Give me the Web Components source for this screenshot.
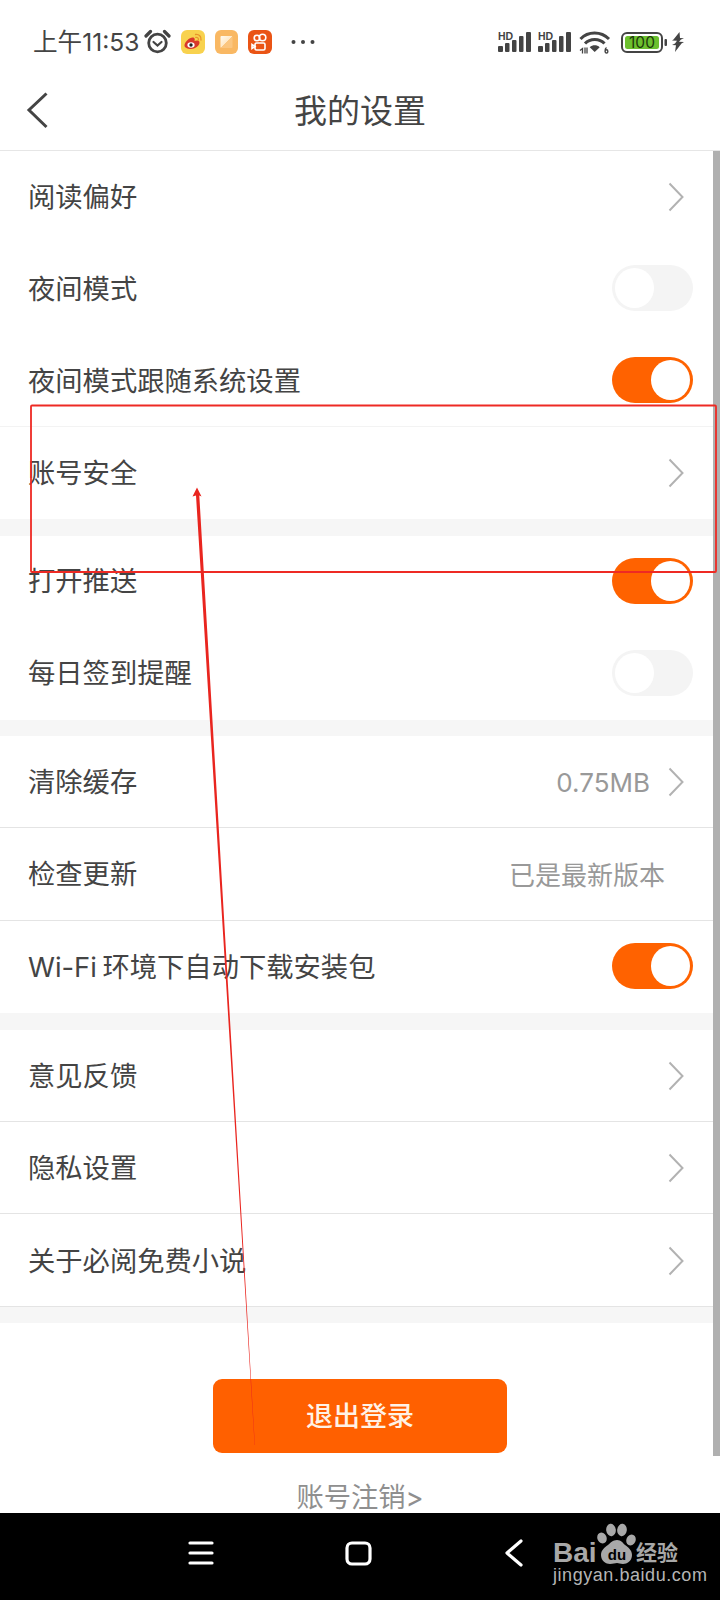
<!DOCTYPE html>
<html lang="zh">
<head>
<meta charset="utf-8">
<title>我的设置</title>
<style>
html,body{margin:0;padding:0;background:#fff}
body{width:720px;height:1600px;overflow:hidden;font-family:Inter,"Noto Sans CJK SC","Noto Sans",sans-serif;color:#444}
</style>
</head>
<body>
<settings-screen>
  <status-bar></status-bar>
  <title-bar>我的设置</title-bar>
  <scroll-area>
    <setting-row kind="link">阅读偏好</setting-row>
    <setting-row kind="off">夜间模式</setting-row>
    <setting-row kind="on" line="soft">夜间模式跟随系统设置</setting-row>
    <setting-row kind="link">账号安全</setting-row>
    <section-gap></section-gap>
    <setting-row kind="on">打开推送</setting-row>
    <setting-row kind="off">每日签到提醒</setting-row>
    <section-gap></section-gap>
    <setting-row tall kind="link" value="0.75MB" line="hard">清除缓存</setting-row>
    <setting-row tall kind="text" value="已是最新版本" line="hard">检查更新</setting-row>
    <setting-row tall kind="on">Wi-Fi 环境下自动下载安装包</setting-row>
    <section-gap></section-gap>
    <setting-row tall kind="link" line="hard">意见反馈</setting-row>
    <setting-row tall kind="link" line="hard">隐私设置</setting-row>
    <setting-row tall kind="link" line="hard">关于必阅免费小说</setting-row>
    <section-gap></section-gap>
    <logout-block></logout-block>
  </scroll-area>
  <nav-bar></nav-bar>
  <red-annotation></red-annotation>
</settings-screen>

<script>
function def(name, css, html){
  customElements.define(name, class extends HTMLElement{
    connectedCallback(){
      if(this.shadowRoot) return;
      const r=this.attachShadow({mode:'open'});
      r.innerHTML='<style>'+css+'</style>'+(typeof html==='function'?html(this):html);
    }
  });
}

def('settings-screen',
  ':host{display:flex;flex-direction:column;position:relative;width:720px;height:1600px;overflow:hidden;background:#fff}',
  '<slot></slot>');

def('status-bar',
  `:host{display:flex;align-items:center;height:80px;padding:4px 0 0 33px;box-sizing:border-box;color:#444;flex:none}
   .time{font:400 24.600px/1 Inter,"Noto Sans CJK SC",sans-serif;width:111px;white-space:nowrap}
   svg{display:block;flex:none}
   .right{margin-left:auto;margin-right:36px;display:flex;align-items:center}`,
  `<span class="time">上午11:53</span>
   <svg width="27" height="26" viewBox="0 0 27 26" fill="none" stroke="#444" stroke-width="2.800">
     <circle cx="13.500" cy="14" r="8.800"/><path d="M9.500 13l4 3.500 4-3.500" stroke-width="2.200" stroke-linecap="round"/>
     <path d="M2 7L6.500 2.500M25 7L20.500 2.500" stroke-width="3.200" stroke-linecap="round"/>
   </svg>
   <svg style="margin-left:10px" width="24" height="24" viewBox="0 0 24 24">
     <rect width="24" height="24" rx="6" fill="#f8d24e"/>
     <path d="M3.500 15.500c0-3.500 5-8 8-8 2.500 0 2.500 2 2 3.500 2-.8 5-.8 5 1.500 0 3.500-4.500 6.500-8.500 6.500-3.500 0-6.500-1.500-6.500-3.500z" fill="#d8382a"/>
     <ellipse cx="10" cy="15" rx="3.600" ry="2.800" fill="#fff"/><circle cx="10" cy="15" r="1.700" fill="#222"/>
     <path d="M14.500 4.500c3.500-.5 6 2 5.500 5.500M14.800 7.300c1.700-.2 2.800 1 2.600 2.500" fill="none" stroke="#e8932a" stroke-width="1.300" stroke-linecap="round"/>
   </svg>
   <svg style="margin-left:10px" width="23" height="24" viewBox="0 0 23 24">
     <defs><linearGradient id="g" x1="0" y1="0" x2="1" y2="1"><stop offset="0" stop-color="#fffaf0"/><stop offset=".5" stop-color="#ffe9c8"/><stop offset=".5" stop-color="#fbc680"/></linearGradient></defs>
     <rect width="23" height="24" rx="6" fill="#f9b863"/>
     <rect x="5.500" y="6" width="12" height="12" rx="1" fill="url(#g)"/>
   </svg>
   <svg style="margin-left:10px" width="24" height="24" viewBox="0 0 24 24" fill="none" stroke="#fff" stroke-width="1.600">
     <rect width="24" height="24" rx="6" fill="#ea5415" stroke="none"/>
     <circle cx="9" cy="8" r="2.800"/><circle cx="14.500" cy="7.500" r="3.300"/>
     <rect x="7" y="13" width="10" height="7" rx="1.500"/><path d="M7 16.500l-3-2v4z"/>
   </svg>
   <svg style="margin-left:19px" width="24" height="6" viewBox="0 0 24 6" fill="#444">
     <circle cx="2.500" cy="3" r="2"/><circle cx="12" cy="3" r="2"/><circle cx="21.500" cy="3" r="2"/>
   </svg>
   <div class="right">
     <signal-icon></signal-icon>
     <signal-icon style="margin-left:7px"></signal-icon>
     <svg style="margin-left:8px" width="32" height="24" viewBox="0 0 32 24" fill="none" stroke="#444" stroke-width="3">
       <path d="M1.500 9C9 1 22 1 30 9"/><path d="M6 13.500C11 8 20.500 8 25.500 13.500"/>
       <path d="M15.700 22l-5-4.700c3-2.600 7-2.600 10 0z" fill="#444" stroke="none"/>
       <path d="M1 20.500l2.500-2v5M6 17.500v6M8 17.500v6" stroke-width="1.300"/>
       <path d="M27.500 17.500c-1.800 1.200-2 5.500 0 5.500 1.800 0 1.800-3.200 0-3.200-.8 0-1.300.3-1.500 1" stroke-width="1.400"/>
     </svg>
     <svg style="margin-left:10px" width="46" height="21" viewBox="0 0 46 21">
       <rect x="1" y="1" width="40" height="19" rx="5" fill="none" stroke="#444" stroke-width="2"/>
       <rect x="4" y="4" width="34" height="13" rx="2.500" fill="#6cc02e"/>
       <rect x="43.500" y="7" width="2.500" height="7" rx="1" fill="#444"/>
       <text x="21" y="16.300" text-anchor="middle" font-family="Inter,sans-serif" font-size="15.500" fill="#1d3a0c">100</text>
     </svg>
     <svg style="margin-left:5px" width="12" height="20" viewBox="0 0 12 20" fill="#444">
       <path d="M7.500 0L1.500 7.500l-1.500 1 5 .2L3 11.500 0 13l4 .3L3 20l6.500-8.500L12 10 7 9.800 9 7.500l3-1.300-4-.3z"/>
     </svg>
   </div>`);

def('signal-icon',
  `:host{display:block;position:relative;width:33px;height:22px;flex:none}
   svg{display:block}
   b{position:absolute;left:0;top:0;font:700 10.500px/10px "Liberation Sans",sans-serif;color:#444;letter-spacing:-.2px}`,
  `<svg width="33" height="22" viewBox="0 0 33 22" fill="#444">
     <rect x="0" y="15" width="5" height="6" rx="1"/><rect x="7" y="12" width="4.500" height="9" rx="1"/>
     <rect x="14" y="9" width="4.500" height="12" rx="1"/><rect x="21" y="5" width="4.500" height="16" rx="1"/><rect x="28" y="1" width="5" height="20" rx="1"/>
   </svg><b>HD</b>`);

def('title-bar',
  `:host{display:flex;align-items:center;justify-content:center;position:relative;height:71px;flex:none;box-sizing:border-box;border-bottom:1px solid #e6e6e6;font:400 33px/1 "Noto Sans CJK SC",sans-serif;color:#444;padding:0 0 11px}
   svg{position:absolute;left:26px;top:12px}`,
  `<svg width="24" height="38" viewBox="0 0 24 38" fill="none" stroke="#444" stroke-width="3"><path d="M20.500 1.500L3 18l17.500 17"/></svg><slot></slot>`);

def('scroll-area',
  `:host{display:block;position:relative;flex:1;min-height:0}
   .thumb{position:absolute;right:0;top:0;width:7px;height:1305px;background:#b0b0b0}`,
  `<slot></slot><div class="thumb"></div>`);

def('setting-row',
  `:host{display:flex;align-items:center;height:92px;box-sizing:border-box;padding:0 27px 0 28px;font:400 27.300px/1 Inter,"Noto Sans CJK SC","Noto Sans",sans-serif;color:#444;white-space:nowrap}
   :host([tall]){height:92.400px}
   :host([line=soft]){box-shadow:inset 0 -1px 0 #f3f3f3}
   :host([line=hard]){box-shadow:inset 0 -1px 0 #e4e4e4}
   .label{flex:1;padding-top:1px;word-spacing:-2px}
   .val{color:#999;font-size:26px;padding-top:2px}
   svg.chev{display:block;margin-left:18px;margin-right:9px}
   .text{margin-right:28px}`,
  h=>{
    const k=h.getAttribute('kind'),v=h.getAttribute('value');
    const val=v?`<span class="val ${k==='text'?'text':''}">${v}</span>`:'';
    let end='';
    if(k==='link') end=`<svg class="chev" width="16" height="30" viewBox="0 0 16 30" fill="none" stroke="#b2b2b2" stroke-width="2"><path d="M1.500 1.500L14.500 15 1.500 28.500"/></svg>`;
    if(k==='on'||k==='off') end=`<toggle-switch ${k==='on'?'on':''}></toggle-switch>`;
    return `<span class="label"><slot></slot></span>${val}${end}`;
  });

def('toggle-switch',
  `:host{display:block;position:relative;width:81px;height:46px;border-radius:23px;background:#f4f4f4;flex:none;margin-bottom:2px}
   :host([on]){background:#ff6200}
   i{position:absolute;top:3px;left:3px;width:39px;height:40px;border-radius:50%;background:#fff}
   :host([on]) i{left:39px}`,
  `<i></i>`);

def('section-gap',
  `:host{display:block;height:16.500px;background:#f6f6f6}`, ``);

def('logout-block',
  `:host{display:flex;flex-direction:column;align-items:center;padding-top:56px}
   button{display:flex;align-items:center;justify-content:center;box-sizing:border-box;width:294px;height:74px;border:0;border-radius:9px;background:#ff6000;color:#fff2e6;font:500 27px/1 "Noto Sans CJK SC",sans-serif;padding:0 0 3px}
   a{margin-top:31px;font:400 27.300px/1 Inter,"Noto Sans CJK SC",sans-serif;color:#8f8f8f;white-space:nowrap}`,
  `<button>退出登录</button><a>账号注销&gt;</a>`);

def('nav-bar',
  `:host{display:block;position:relative;height:87px;background:#000;flex:none;z-index:1}
   .icons{display:flex;align-items:center;height:100%;padding:0 0 7px 188px;box-sizing:border-box}
   svg{display:block;flex:none}`,
  `<div class="icons">
     <svg width="26" height="24" viewBox="0 0 26 24" stroke="#fff" stroke-width="3.200" stroke-linecap="round"><path d="M2 2h22M2 12h22M2 22h22"/></svg>
     <svg style="margin-left:131px" width="27" height="25" viewBox="0 0 27 25" fill="none" stroke="#fff" stroke-width="3.200"><rect x="2" y="2" width="23" height="21" rx="5"/></svg>
     <svg style="margin-left:132px" width="20" height="30" viewBox="0 0 20 30" fill="none" stroke="#fff" stroke-width="3.200" stroke-linecap="round" stroke-linejoin="round"><path d="M17 3L3 15l14 12"/></svg>
   </div><baidu-mark></baidu-mark>`);

def('baidu-mark',
  `:host{position:absolute;left:553px;top:8px;width:135px;height:64px;display:block;color:#a8a8a8}
   .bai{position:absolute;left:0;top:21px;font:700 28px/22px "Liberation Sans",sans-serif}
   svg{position:absolute;left:40px;top:0}
   .zh{position:absolute;left:83px;top:20px;font:700 21px/20px "Noto Sans CJK SC",sans-serif;white-space:nowrap}
   .url{position:absolute;left:0;top:46px;font:400 18px/16px "Liberation Sans",sans-serif;white-space:nowrap;letter-spacing:.55px;color:#b5b5b5}`,
  `<span class="bai">Bai</span>
   <svg width="46" height="46" viewBox="0 0 46 46" fill="#a8a8a8">
     <ellipse cx="9" cy="17" rx="4.600" ry="5.600" transform="rotate(-25 9 17)"/>
     <ellipse cx="18" cy="9" rx="4.800" ry="6.200" transform="rotate(-8 18 9)"/>
     <ellipse cx="29" cy="9" rx="4.800" ry="6.200" transform="rotate(8 29 9)"/>
     <ellipse cx="38" cy="19" rx="4.600" ry="5.600" transform="rotate(25 38 19)"/>
     <path d="M24 19c4 0 6 3 8 5 3 2 7 5 7 10 0 6-5 9-9 9-3 0-4-1-6-1s-4 1-7 1c-4 0-9-3-9-9 0-5 4-8 7-10 2-2 5-5 9-5z"/>
     <text x="24" y="39" text-anchor="middle" font-family="Liberation Sans,sans-serif" font-weight="700" font-size="15" fill="#000">du</text>
   </svg>
   <span class="zh">经验</span>
   <span class="url">jingyan.baidu.com</span>`);

def('red-annotation',
  `:host{position:absolute;left:0;top:0;width:720px;height:1513px;display:block;pointer-events:none;z-index:2}
   svg{display:block}`,
  `<svg width="720" height="1513" viewBox="0 0 720 1513">
     <rect x="31" y="405.500" width="685" height="166.500" rx="1" fill="none" stroke="#ee2a24" stroke-width="1.800"/>
     <path d="M197 487.500L192.500 496.500 196 495.500 254.600 1445 254.900 1445 199.300 495.500 201.500 496.500z" fill="#e9251f"/>
   </svg>`);
</script>
</body>
</html>
